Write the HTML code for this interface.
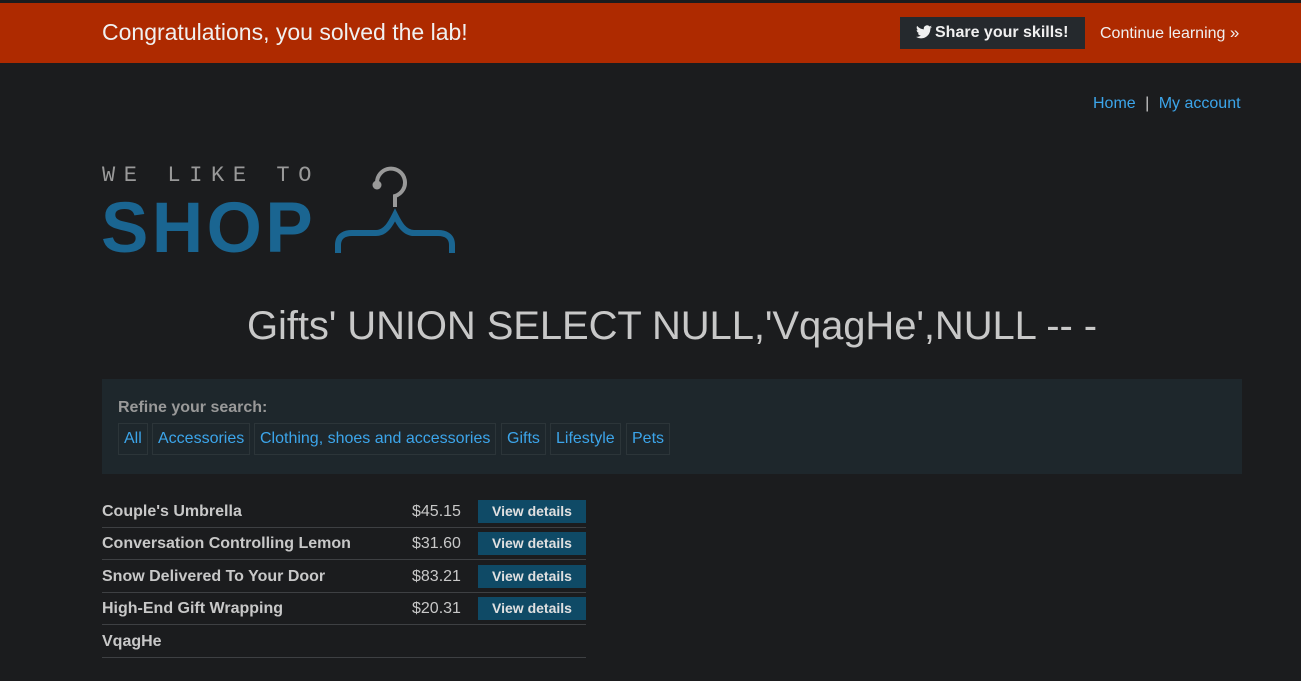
<!DOCTYPE html>
<html><head><style>
*{margin:0;padding:0;box-sizing:border-box}
body{width:1301px;height:681px;background:#1b1c1e;font-family:"Liberation Sans",sans-serif;position:relative;overflow:hidden}
.top{position:absolute;left:0;top:3px;width:1301px;height:60px;background:#ae2a00}
.a{position:absolute;white-space:nowrap}
.fb{position:absolute;top:423px;height:32px;border:1px solid #2c3539;color:#3ca5ea;font-size:16px;line-height:30px;padding:0 5px}
.row{position:absolute;left:102px;width:484px;height:32px;border-bottom:1px solid #3e4043;color:#c8c8c8}
.row b{position:absolute;left:0;top:7px;font-size:16px}
.row span{position:absolute;left:310px;top:7px;font-size:16px}
.row i{position:absolute;left:376px;top:4px;width:108px;height:23px;background:#0f4a66;font-style:normal;font-weight:bold;font-size:14px;text-align:center;line-height:23px;color:#e0e0e0}
</style></head><body>
<div class="top"></div>
<div class="a" style="left:102px;top:19px;font-size:23px;color:#f0f0f0">Congratulations, you solved the lab!</div>
<div class="a" style="left:900px;top:17px;width:185px;height:32px;background:#25292d;color:#f0f0f0;font-weight:bold;font-size:16px;line-height:32px;padding-left:16px">
<svg width="16" height="14" viewBox="0 0 24 20" style="vertical-align:-2px;margin-right:3px"><path fill="#f0f0f0" d="M24 2.4a10 10 0 0 1-2.8.8A5 5 0 0 0 23.3.4a10 10 0 0 1-3.1 1.2A4.9 4.9 0 0 0 11.8 6 14 14 0 0 1 1.7.9a4.9 4.9 0 0 0 1.5 6.6A4.9 4.9 0 0 1 1 6.9a4.9 4.9 0 0 0 3.9 4.8 5 5 0 0 1-2.2.1 4.9 4.9 0 0 0 4.6 3.4A9.9 9.9 0 0 1 0 17.3 14 14 0 0 0 7.5 19.5c9.1 0 14-7.5 14-14v-.6A10 10 0 0 0 24 2.4z"/></svg>Share your skills!</div>
<div class="a" style="left:1100px;top:23px;font-size:16px;color:#f0f0f0">Continue learning <span style="font-size:17px">»</span></div>
<div class="a" style="left:1093px;top:95px;font-size:16px;color:#3ca5ea">Home <span style="color:#c8c8c8;margin:0 5px">|</span> My account</div>
<div class="a" style="left:102px;top:163px;font-family:'Liberation Mono',monospace;font-size:22px;letter-spacing:8.6px;color:#999">WE LIKE TO</div>
<div class="a" style="left:101px;top:193px;font-size:71px;line-height:1;font-weight:bold;color:#1a6591;letter-spacing:3.5px">SHOP</div>
<svg class="a" style="left:330px;top:163px" width="126" height="94" viewBox="0 0 126 94">
<path d="M47 20a14 14 0 1 1 18 13v11" fill="none" stroke="#999" stroke-width="4"/>
<circle cx="47" cy="22" r="4.5" fill="#999"/>
<path d="M8 90v-8c0-10 8-12 14-12h24c10 0 15-10 19-18c4 8 9 18 19 18h24c6 0 14 2 14 12v8" fill="none" stroke="#1a6591" stroke-width="6"/>
</svg>
<div class="a" style="left:0;width:1344px;text-align:center;top:304px;font-size:40px;color:#c8c8c8;letter-spacing:-0.1px">Gifts' UNION SELECT NULL,'VqagHe',NULL -- -</div>
<div class="a" style="left:102px;top:379px;width:1140px;height:95px;background:#1e272c"></div>
<div class="a" style="left:118px;top:399px;font-size:16px;font-weight:bold;color:#999">Refine your search:</div>
<div class="fb" style="left:118px">All</div>
<div class="fb" style="left:152px">Accessories</div>
<div class="fb" style="left:254px">Clothing, shoes and accessories</div>
<div class="fb" style="left:501px">Gifts</div>
<div class="fb" style="left:550px">Lifestyle</div>
<div class="fb" style="left:626px">Pets</div>
<div class="row" style="top:496px"><b>Couple's Umbrella</b><span>$45.15</span><i>View details</i></div>
<div class="row" style="top:528px"><b>Conversation Controlling Lemon</b><span>$31.60</span><i>View details</i></div>
<div class="row" style="top:561px"><b>Snow Delivered To Your Door</b><span>$83.21</span><i>View details</i></div>
<div class="row" style="top:593px"><b>High-End Gift Wrapping</b><span>$20.31</span><i>View details</i></div>
<div class="row" style="top:626px"><b>VqagHe</b></div>
</body></html>
